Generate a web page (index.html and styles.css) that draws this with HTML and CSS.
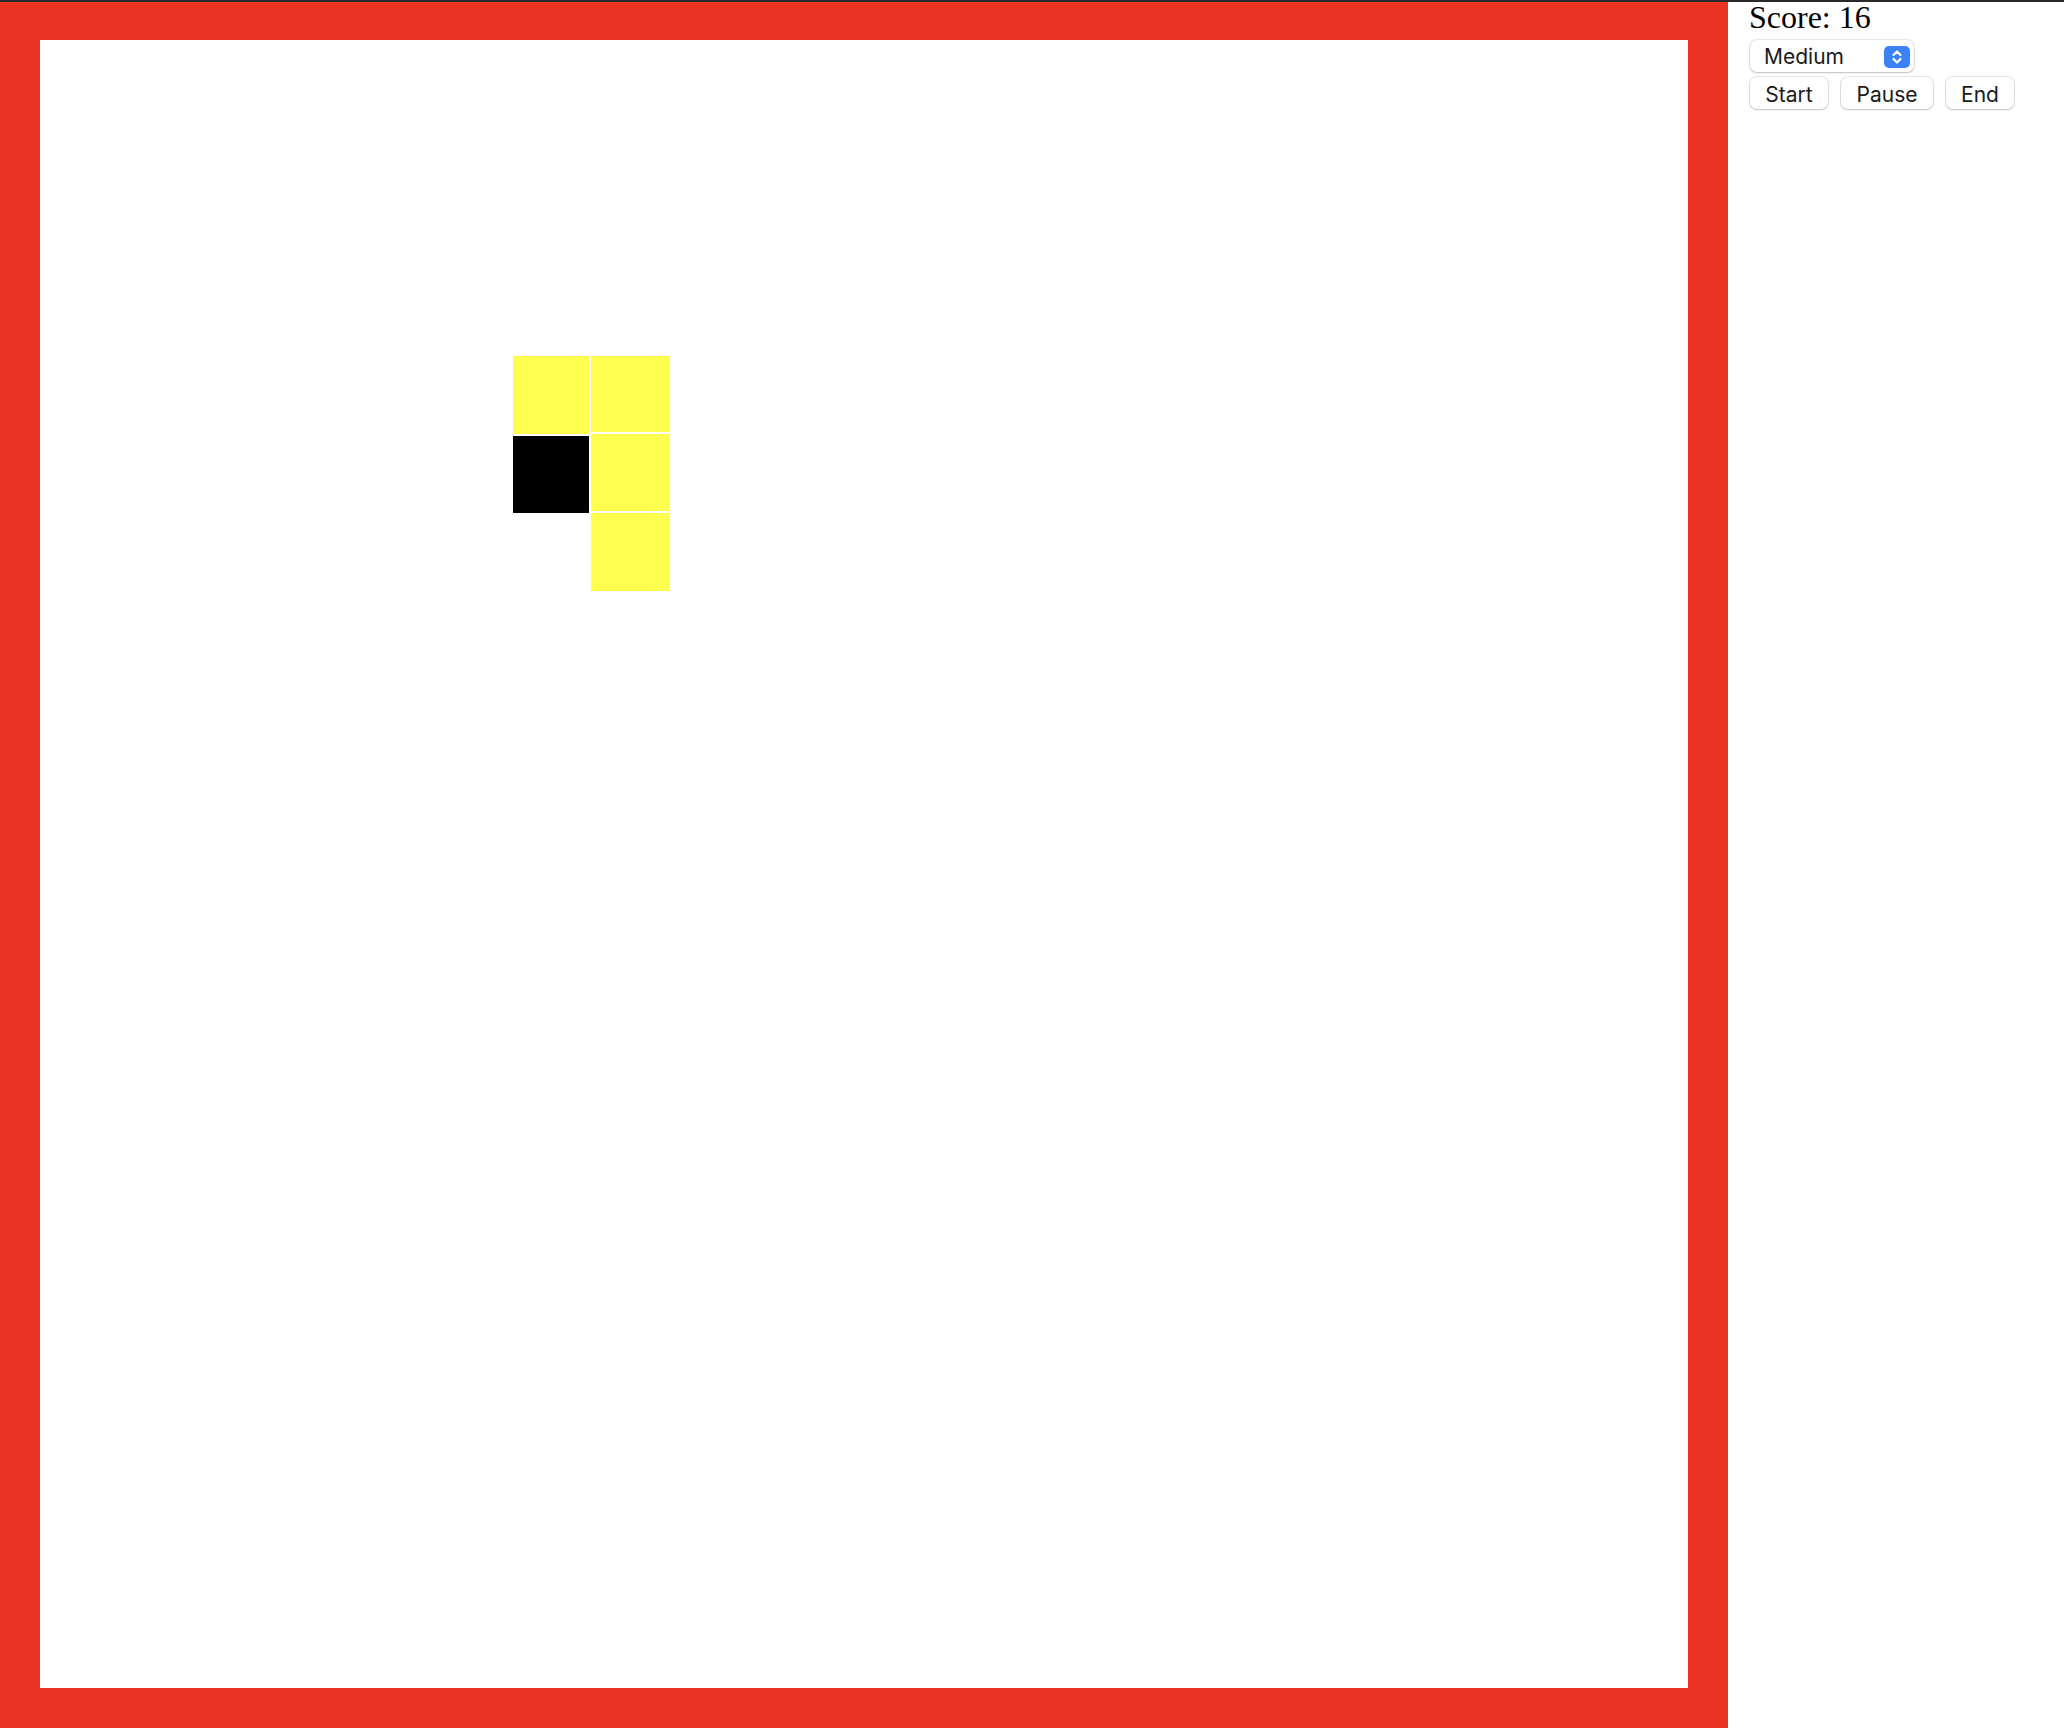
FILE: index.html
```html
<!DOCTYPE html>
<html lang="en">
<head>
<meta charset="utf-8">
<title>Snake</title>
<link rel="stylesheet" href="styles.css">
</head>
<body>
<div class="window-edge"></div>
<main class="app">
  <div class="board">
    <div class="cell food" style="left:473px;top:316px;width:76px;height:78px"></div>
    <div class="cell head" style="left:473px;top:396px;width:76px;height:77px"></div>
    <div class="cell body-seg" style="left:551px;top:316px;width:79px;height:76px"></div>
    <div class="cell body-seg" style="left:551px;top:394px;width:79px;height:77px"></div>
    <div class="cell body-seg" style="left:551px;top:473px;width:79px;height:78px"></div>
  </div>
  <aside class="panel">
    <div class="score">Score: 16</div>
    <div class="select">
      <span class="select-label">Medium</span>
      <span class="stepper">
        <svg width="12" height="16" viewBox="0 0 12 16" fill="none" stroke="#fff" stroke-width="2.2" stroke-linecap="round" stroke-linejoin="round">
          <path d="M2.5 6 L6 2.5 L9.5 6"/>
          <path d="M2.5 10 L6 13.5 L9.5 10"/>
        </svg>
      </span>
    </div>
    <div class="buttons">
      <button class="btn btn-start">Start</button>
      <button class="btn btn-pause">Pause</button>
      <button class="btn btn-end">End</button>
    </div>
  </aside>
</main>
</body>
</html>
```

FILE: styles.css
```css
html, body {
  margin: 0;
  padding: 0;
  background: #ffffff;
}

.window-edge {
  position: fixed;
  top: 0;
  left: 0;
  right: 0;
  height: 2px;
  background: #2a2a2a;
  z-index: 10;
}

.app {
  display: flex;
  align-items: flex-start;
}

.board {
  position: relative;
  box-sizing: border-box;
  width: 1728px;
  height: 1728px;
  border: 40px solid #ea3323;
  background: #ffffff;
  flex: none;
}

.cell {
  position: absolute;
}

.food,
.body-seg {
  background: #ffff50;
}

.head {
  background: #000000;
}

.panel {
  padding-left: 21px;
  display: flex;
  flex-direction: column;
}

.score {
  font-family: "Liberation Serif", "Times New Roman", serif;
  font-size: 32px;
  line-height: 37px;
  color: #000;
  height: 38px;
  margin-top: -1px;
}

.select {
  box-sizing: border-box;
  width: 164px;
  height: 32px;
  margin-left: 1px;
  margin-top: 3px;
  border-radius: 7px;
  background: #fff;
  box-shadow: 0 0 0 1px rgba(0, 0, 0, 0.09), 0 1px 2px rgba(0, 0, 0, 0.18);
  display: flex;
  align-items: center;
  justify-content: space-between;
  padding: 1px 4px 0 14px;
  font-family: Inter, "Noto Sans", sans-serif;
  font-size: 21px;
  color: #1a1a1a;
}

.stepper {
  width: 26px;
  height: 22px;
  border-radius: 5px;
  background: #3b82f7;
  display: flex;
  align-items: center;
  justify-content: center;
}

.buttons {
  display: flex;
  gap: 13px;
  margin-top: 5px;
  margin-left: 1px;
}

.btn {
  box-sizing: border-box;
  height: 32px;
  padding: 2px 0 0;
  border: none;
  border-radius: 7px;
  background: #fff;
  box-shadow: 0 0 0 1px rgba(0, 0, 0, 0.09), 0 1px 2px rgba(0, 0, 0, 0.18);
  font-family: Inter, "Noto Sans", sans-serif;
  font-size: 21px;
  color: #1a1a1a;
  text-align: center;
}

.btn-start { width: 78px; }
.btn-pause { width: 92px; }
.btn-end { width: 68px; }
```
